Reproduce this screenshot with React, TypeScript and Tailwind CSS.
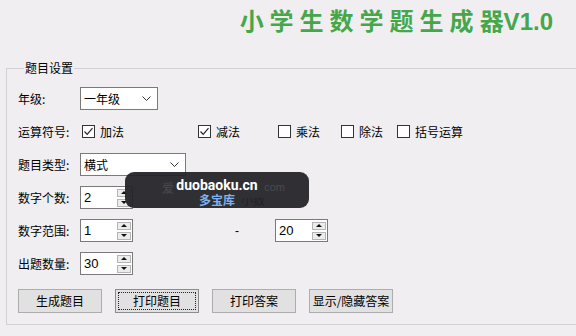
import React from "react";

const CJK = { fontFamily: '"Noto Sans CJK SC", "Microsoft YaHei", sans-serif' };
const NUM = { fontFamily: '"Liberation Sans", Arial, sans-serif' };

function Chevron() {
  return (
    <svg width="9" height="5" viewBox="0 0 9 5" className="block">
      <path d="M0.5 0.5 L4.5 4.5 L8.5 0.5" fill="none" stroke="#333" strokeWidth="1" />
    </svg>
  );
}

function Select({ value, w }: { value: string; w: string }) {
  return (
    <div className={`${w} h-[23px] border border-[#7a7a7a] bg-white flex items-center justify-between pl-[3px] pr-[6px]`}>
      <span className="text-[12px] leading-none text-black" style={CJK}>{value}</span>
      <Chevron />
    </div>
  );
}

function SpinBtn({ up }: { up: boolean }) {
  return (
    <div className="w-[14px] h-[8px] border border-[#b5b5b5] bg-[#ececec] flex items-center justify-center">
      <svg width="6" height="3" viewBox="0 0 6 3" className="block">
        {up ? <path d="M0 3 L3 0 L6 3 Z" fill="#111" /> : <path d="M0 0 L3 3 L6 0 Z" fill="#111" />}
      </svg>
    </div>
  );
}

function NumInput({ value }: { value: string }) {
  return (
    <div className="w-[53px] h-[23px] border border-[#7a7a7a] bg-white flex items-center justify-between pl-[3px] pr-[1px]">
      <span className="text-[13px] leading-none text-black" style={NUM}>{value}</span>
      <div className="flex flex-col gap-[2px]">
        <SpinBtn up />
        <SpinBtn up={false} />
      </div>
    </div>
  );
}

function Check({ checked, label, w }: { checked: boolean; label: string; w: string }) {
  return (
    <div className={`${w} flex items-center gap-[5px]`}>
      <div className="w-[13px] h-[13px] border border-[#333] bg-white flex items-center justify-center">
        {checked && (
          <svg width="11" height="11" viewBox="0 0 11 11" className="block">
            <path d="M1.5 5.5 L4.2 8.3 L9.5 2.2" fill="none" stroke="#222" strokeWidth="1.2" />
          </svg>
        )}
      </div>
      <span className="text-[12px] text-black leading-none" style={CJK}>{label}</span>
    </div>
  );
}

function Label({ text }: { text: string }) {
  return (
    <span className="w-[62px] shrink-0 text-[12px] text-black leading-none" style={CJK}>{text}</span>
  );
}

function Btn({ text, focus }: { text: string; focus?: boolean }) {
  return (
    <div
      className={`w-[84px] h-[24px] border ${focus ? "border-[#8c8c8c]" : "border-[#adadad]"} bg-[#e1e1e1] flex items-center justify-center p-[2px]`}
    >
      <div
        className={`w-full h-full flex items-center justify-center border border-dotted ${focus ? "border-[#222]" : "border-transparent"}`}
      >
        <span className="text-[12px] text-black leading-none whitespace-nowrap" style={CJK}>{text}</span>
      </div>
    </div>
  );
}

export default function App() {
  return (
    <div className="w-[576px] h-[336px] overflow-hidden bg-[#f0eef1] relative">
      <div className="flex justify-end pr-[23px] pt-[7px] h-[61px]">
        <span
          className="text-[24px] leading-[30px] font-bold text-[#46a64a]"
          style={{ fontFamily: '"Liberation Sans", "Noto Sans CJK SC", sans-serif' }}
        >
          <span className="tracking-[6px]">小学生数学题生成</span>器V1.0
        </span>
      </div>
      <fieldset className="ml-[6px] w-[640px] border border-[#d3d1d5] pl-[11px] pt-[12px] pb-[11px]">
        <legend className="ml-[6px] px-[1px] text-[12px] leading-[14px] text-black" style={CJK}>
          题目设置
        </legend>
        <div className="flex flex-col">
          <div className="flex items-center h-[23px]">
            <Label text="年级:" />
            <Select value="一年级" w="w-[78px]" />
          </div>
          <div className="flex items-center h-[23px] mt-[10px]">
            <Label text="运算符号:" />
            <div className="flex items-center ml-[2px]">
              <Check checked label="加法" w="w-[116px]" />
              <Check checked label="减法" w="w-[80px]" />
              <Check checked={false} label="乘法" w="w-[63px]" />
              <Check checked={false} label="除法" w="w-[56px]" />
              <Check checked={false} label="括号运算" w="w-[90px]" />
            </div>
          </div>
          <div className="flex items-center h-[23px] mt-[10px]">
            <Label text="题目类型:" />
            <Select value="横式" w="w-[106px]" />
          </div>
          <div className="flex items-center h-[23px] mt-[10px]">
            <Label text="数字个数:" />
            <NumInput value="2" />
            <span className="ml-[108px] mt-[4px] text-[12px] text-black leading-none" style={CJK}>小数</span>
          </div>
          <div className="flex items-center h-[23px] mt-[10px]">
            <Label text="数字范围:" />
            <NumInput value="1" />
            <span className="ml-[102px] text-[12px] text-black leading-none" style={NUM}>-</span>
            <div className="ml-[36px]">
              <NumInput value="20" />
            </div>
          </div>
          <div className="flex items-center h-[23px] mt-[10px]">
            <Label text="出题数量:" />
            <NumInput value="30" />
          </div>
          <div className="flex items-center gap-[13px] mt-[14px]">
            <Btn text="生成题目" />
            <Btn text="打印题目" focus />
            <Btn text="打印答案" />
            <Btn text="显示/隐藏答案" />
          </div>
        </div>
      </fieldset>

      <div className="absolute left-[125px] top-[172px] w-[184px] h-[36px] rounded-[9px] bg-[#232327]/[0.94]">
        <div className="absolute left-[34px] top-[5px] w-[129px] h-[21px] bg-[#303034] flex items-center justify-between px-[3px]">
          <span className="text-[12px] text-[#4a4a4e] leading-none" style={CJK}>爱</span>
          <span className="text-[11px] text-[#4a4a4e] leading-none" style={NUM}>com</span>
        </div>
        <div className="absolute inset-0 flex flex-col items-center pt-[6px]">
          <span className="text-[14px] font-bold text-white leading-[15px]" style={{ fontFamily: "Roboto, sans-serif" }}>
            duobaoku.cn
          </span>
          <span className="text-[12px] font-bold text-[#7fb2ee] leading-[13px]" style={CJK}>
            多宝库
          </span>
        </div>
      </div>
    </div>
  );
}
